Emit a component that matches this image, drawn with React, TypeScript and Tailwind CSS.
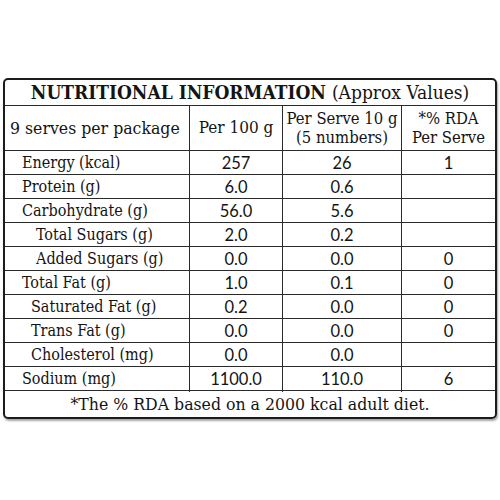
import React from "react";

interface Row {
  label: string;
  indent: string;
  per100: string;
  perServe: string;
  rda: string;
}

const rows: Row[] = [
  { label: "Energy (kcal)", indent: "pl-[17px]", per100: "257", perServe: "26", rda: "1" },
  { label: "Protein (g)", indent: "pl-[17px]", per100: "6.0", perServe: "0.6", rda: "" },
  { label: "Carbohydrate (g)", indent: "pl-[17px]", per100: "56.0", perServe: "5.6", rda: "" },
  { label: "Total Sugars (g)", indent: "pl-[31px]", per100: "2.0", perServe: "0.2", rda: "" },
  { label: "Added Sugars (g)", indent: "pl-[31px]", per100: "0.0", perServe: "0.0", rda: "0" },
  { label: "Total Fat (g)", indent: "pl-[17px]", per100: "1.0", perServe: "0.1", rda: "0" },
  { label: "Saturated Fat (g)", indent: "pl-[26px]", per100: "0.2", perServe: "0.0", rda: "0" },
  { label: "Trans Fat (g)", indent: "pl-[26px]", per100: "0.0", perServe: "0.0", rda: "0" },
  { label: "Cholesterol (mg)", indent: "pl-[26px]", per100: "0.0", perServe: "0.0", rda: "" },
  { label: "Sodium (mg)", indent: "pl-[17px]", per100: "1100.0", perServe: "110.0", rda: "6" },
];

const serif = "font-['DejaVu_Serif',serif] font-stretch-condensed";
const sans = "font-['Lato','Open_Sans',sans-serif]";

const App: React.FC = () => {
  return (
    <div className="w-[500px] h-[500px] bg-white pt-[78px] pl-[3px] text-[#141414]">
      <div className="w-[494px] border-2 border-[#1c1c1c] rounded-[5px] overflow-hidden shadow-[1px_2px_2px_rgba(0,0,0,0.35)]">
        <div className={`h-[26px] border-b border-[#2a2a2a] flex items-center justify-center text-[19px] leading-none ${serif}`}>
          <span className="font-bold">NUTRITIONAL INFORMATION</span>
          <span className="ml-[6px]">(Approx Values)</span>
        </div>

        <div className="grid grid-cols-[184px_93px_119px_94px] h-[45px] border-b border-[#2a2a2a] text-[17px]">
          <div className={`flex items-center pl-[5px] text-[17.5px] ${serif}`}>9 serves per package</div>
          <div className={`flex items-center justify-center border-l border-[#2a2a2a] ${serif}`}>Per 100 g</div>
          <div className={`flex flex-col items-center justify-center text-[16.5px] leading-[19.5px] border-l border-[#2a2a2a] ${serif}`}>
            <span>Per Serve 10 g</span>
            <span>(5 numbers)</span>
          </div>
          <div className={`flex flex-col items-center justify-center text-[16.5px] leading-[19.5px] border-l border-[#2a2a2a] ${serif}`}>
            <span>*% RDA</span>
            <span>Per Serve</span>
          </div>
        </div>

        {rows.map((r) => (
          <div
            key={r.label}
            className="grid grid-cols-[184px_93px_119px_94px] h-[24px] border-b border-[#2a2a2a]"
          >
            <div className={`flex items-center text-[16px] ${r.indent} ${serif}`}>{r.label}</div>
            <div className={`flex items-center justify-center text-[16.5px] border-l border-[#2a2a2a] ${sans}`}>{r.per100}</div>
            <div className={`flex items-center justify-center text-[16.5px] border-l border-[#2a2a2a] ${sans}`}>{r.perServe}</div>
            <div className={`flex items-center justify-center text-[16.5px] border-l border-[#2a2a2a] ${sans}`}>{r.rda}</div>
          </div>
        ))}

        <div className={`h-[26px] flex items-center justify-center text-[17.5px] ${serif}`}>
          *The % RDA based on a 2000 kcal adult diet.
        </div>
      </div>
    </div>
  );
};

export default App;
